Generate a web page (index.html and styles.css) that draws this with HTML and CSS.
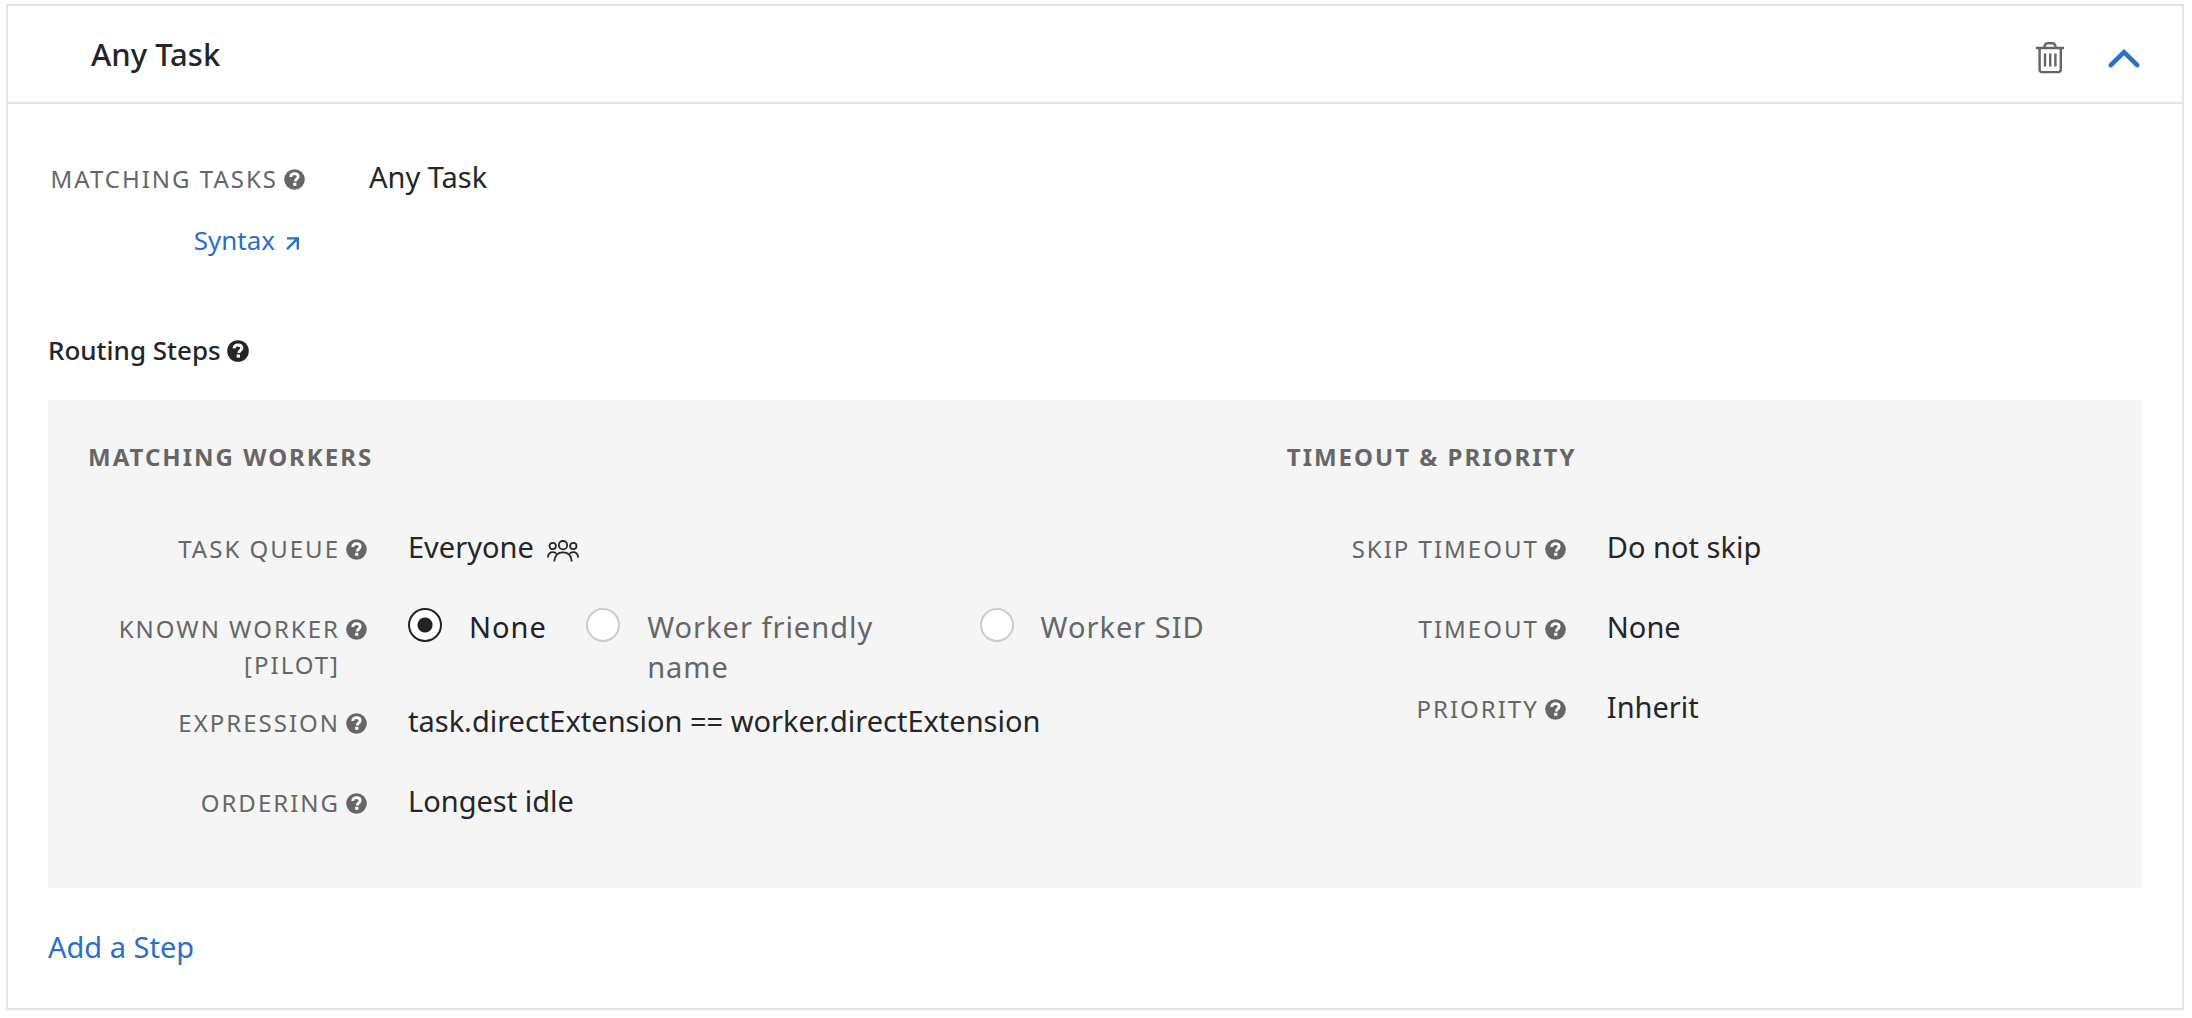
FILE: index.html
```html
<!DOCTYPE html>
<html lang="en">
<head>
<meta charset="utf-8">
<meta name="viewport" content="width=device-width, initial-scale=1">
<title>Workflow filter – Any Task</title>
<link rel="stylesheet" href="styles.css">
</head>
<body>
<svg class="sprite" aria-hidden="true">
  <symbol id="help" viewBox="0 0 21 21">
    <circle cx="10.5" cy="10.5" r="10.3" fill="currentColor"/>
    <path class="help-mark" d="M6.700 8C6.900 5.700 8.400 4.700 10.500 4.700c2.200 0 3.700 1.100 3.700 2.900 0 2.400-2.900 2.300-2.900 4.800" fill="none" stroke-width="2.800"/>
    <rect class="help-dot" x="9.200" y="13.800" width="3.200" height="3"/>
  </symbol>
</svg>
<main class="filter">
  <header class="filter-header">
    <h1 class="filter-title">Any Task</h1>
    <div class="filter-actions">
      <button type="button" class="icon-button" aria-label="Delete filter">
        <svg width="28" height="32" viewBox="0 0 28 32" fill="none" stroke="#666" stroke-width="2.400">
          <path d="M0 6h28M8.200 6c.3-3 1.200-4.700 3.300-4.700h5c2.100 0 3 1.700 3.300 4.700M3.600 6v21.500c0 1.600 1 2.600 2.600 2.600h16c1.600 0 2.600-1 2.600-2.600V6M9 11.500v13M14.200 11.500v13M19.400 11.500v13"/>
        </svg>
      </button>
      <button type="button" class="icon-button" aria-label="Collapse filter" aria-expanded="true">
        <svg width="32" height="20" viewBox="0 0 32 20" fill="none" stroke="#2b6fc9" stroke-width="4.600" stroke-linecap="round">
          <path d="M2.800 17.200L16 4.200l13.200 13"/>
        </svg>
      </button>
    </div>
  </header>

  <div class="filter-body">
    <div class="match">
      <div class="match-label">
        <div class="label"><span>MATCHING TASKS</span><button type="button" class="help" aria-label="Help: matching tasks"><svg><use href="#help"/></svg></button></div>
        <a href="#syntax" class="syntax">Syntax
          <svg width="13" height="13" viewBox="0 0 13 13" fill="none" stroke="currentColor" stroke-width="2.400"><path d="M1 1.400H11.800v11M11.500 1.700L1 12.200"/></svg>
        </a>
      </div>
      <div class="value">Any Task</div>
    </div>

    <h2 class="steps-title">Routing Steps<button type="button" class="help help-dark" aria-label="Help: routing steps"><svg><use href="#help"/></svg></button></h2>

    <section class="step">
      <div class="step-column">
        <h3 class="step-heading">MATCHING WORKERS</h3>
        <div class="row">
          <div class="label"><span>TASK QUEUE</span><button type="button" class="help" aria-label="Help: task queue"><svg><use href="#help"/></svg></button></div>
          <div class="value">Everyone
            <svg class="people" width="32" height="22" viewBox="0 0 32 22" fill="none" stroke="currentColor" stroke-width="1.800">
              <ellipse cx="16" cy="5.200" rx="4.200" ry="4.200"/>
              <circle cx="5.700" cy="6" r="3.200"/><circle cx="26.300" cy="6" r="3.200"/>
              <path d="M7.200 21.500C7.800 15.500 11 12.400 16 12.400s8.200 3.100 8.800 9.100M.8 17.600c.4-3.600 2.200-5.400 4.900-5.400 1.500 0 2.800.5 3.700 1.500M31.200 17.600c-.4-3.600-2.200-5.400-4.900-5.400-1.500 0-2.800.5-3.700 1.500"/>
            </svg>
          </div>
        </div>
        <div class="row">
          <div class="label"><span id="known">KNOWN WORKER<br>[PILOT]</span><button type="button" class="help" aria-label="Help: known worker"><svg><use href="#help"/></svg></button></div>
          <div class="value radios" role="radiogroup" aria-labelledby="known">
            <label class="radio"><input type="radio" name="known-worker" checked><span>None</span></label>
            <label class="radio radio-wrap"><input type="radio" name="known-worker"><span>Worker friendly name</span></label>
            <label class="radio"><input type="radio" name="known-worker"><span>Worker SID</span></label>
          </div>
        </div>
        <div class="row">
          <div class="label"><span>EXPRESSION</span><button type="button" class="help" aria-label="Help: expression"><svg><use href="#help"/></svg></button></div>
          <div class="value">task.directExtension == worker.directExtension</div>
        </div>
        <div class="row">
          <div class="label"><span>ORDERING</span><button type="button" class="help" aria-label="Help: ordering"><svg><use href="#help"/></svg></button></div>
          <div class="value">Longest idle</div>
        </div>
      </div>
      <div class="step-column">
        <h3 class="step-heading">TIMEOUT &amp; PRIORITY</h3>
        <div class="row">
          <div class="label"><span>SKIP TIMEOUT</span><button type="button" class="help" aria-label="Help: skip timeout"><svg><use href="#help"/></svg></button></div>
          <div class="value">Do not skip</div>
        </div>
        <div class="row">
          <div class="label"><span>TIMEOUT</span><button type="button" class="help" aria-label="Help: timeout"><svg><use href="#help"/></svg></button></div>
          <div class="value">None</div>
        </div>
        <div class="row">
          <div class="label"><span>PRIORITY</span><button type="button" class="help" aria-label="Help: priority"><svg><use href="#help"/></svg></button></div>
          <div class="value">Inherit</div>
        </div>
      </div>
    </section>

    <button type="button" class="add-step">Add a Step</button>
  </div>
</main>
</body>
</html>
```
FILE: styles.css
```css
* {
  box-sizing: border-box;
}

body {
  margin: 4px 8px 8px 6px;
  background: #fff;
  color: #242628;
  font: 400 29px/40px "Noto Sans", "Open Sans", sans-serif;
}

h1, h2, h3 {
  margin: 0;
}

button {
  padding: 0;
  border: 0;
  background: none;
  font: inherit;
  cursor: pointer;
}

svg {
  display: block;
}

.sprite {
  position: absolute;
  width: 0;
  height: 0;
}

.filter {
  border: 2px solid #e5e5e5;
}

.filter-header {
  display: flex;
  align-items: center;
  justify-content: space-between;
  height: 98px;
  padding: 0 42px 0 83px;
  border-bottom: 2px solid #e5e5e5;
}

.filter-title {
  font-size: 31px;
  font-weight: 500;
}

.filter-actions {
  display: flex;
  align-items: center;
  gap: 44px;
  padding-top: 8px;
}

.filter-body {
  padding: 53px 40px 41px;
}

.match {
  display: flex;
  align-items: flex-start;
  gap: 64px;
}

.match-label {
  display: flex;
  flex-direction: column;
  align-items: flex-end;
  gap: 25px;
  width: 257px;
}

.label {
  display: flex;
  align-items: flex-start;
  justify-content: flex-end;
  gap: 6px;
  padding-top: 4px;
  color: #666;
  font-size: 24px;
  line-height: 36px;
  letter-spacing: 2px;
  text-align: right;
  white-space: nowrap;
}

.help {
  flex: none;
  width: 21px;
  height: 21px;
  margin-top: 8px;
  color: #666;
}

.help svg {
  width: 100%;
  height: 100%;
}

.help-mark {
  stroke: #fff;
}

.help-dot {
  fill: #fff;
}

.syntax {
  display: flex;
  align-items: center;
  gap: 11px;
  padding-right: 6px;
  color: #2b6fc9;
  font-size: 26px;
  line-height: 36px;
  text-decoration: none;
}

.syntax svg {
  margin-top: 6px;
}

.steps-title {
  display: flex;
  align-items: flex-start;
  gap: 6px;
  margin-top: 74px;
  font-size: 26px;
  font-weight: 500;
  line-height: 36px;
}

.help-dark {
  width: 22px;
  height: 22px;
  color: #242628;
}

.step {
  display: grid;
  grid-template-columns: 25fr 17fr;
  margin-top: 32px;
  padding: 41px 40px 27px;
  background: #f5f5f5;
}

.step-heading {
  margin-bottom: 54px;
  color: #666;
  font-size: 24px;
  font-weight: 700;
  line-height: 32px;
  letter-spacing: 2px;
}

.row {
  display: flex;
  align-items: flex-start;
  gap: 41px;
  min-height: 80px;
  padding-bottom: 14px;
}

.row .label {
  flex: none;
  width: 279px;
}

.row .value {
  flex: 1;
}

.people {
  display: inline-block;
  margin-left: 6px;
  vertical-align: -4px;
}

.radios {
  display: grid;
  grid-template-columns: 178fr 393fr 307fr;
}

.radio {
  display: flex;
  align-items: flex-start;
  gap: 27px;
  color: #666;
  letter-spacing: 1px;
}

.radio:has(:checked) {
  color: #222;
}

.radio-wrap {
  padding-right: 80px;
}

.radio input {
  appearance: none;
  flex: none;
  width: 34px;
  height: 34px;
  margin: 1px 0 0;
  border: 2px solid #ccc;
  border-radius: 50%;
  background: #fff;
}

.radio input:checked {
  border-color: #222;
  background: radial-gradient(circle, #222 7px, #fff 8px);
}

.add-step {
  display: block;
  margin-top: 39px;
  color: #2b6fc9;
}
```
